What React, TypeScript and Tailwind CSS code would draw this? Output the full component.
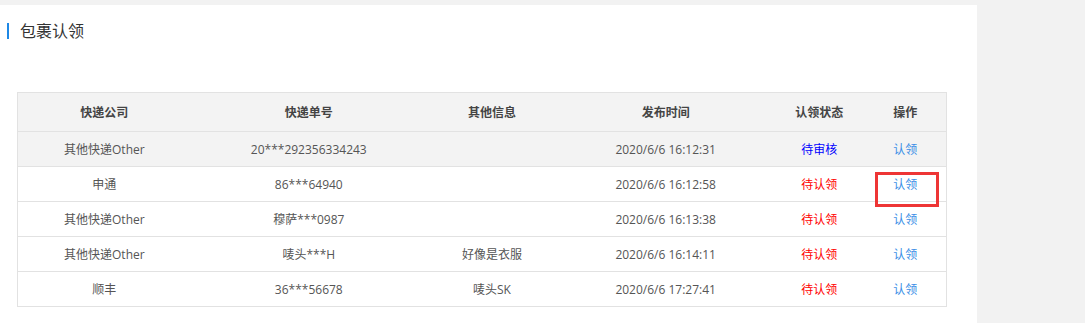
import React from 'react';

type Row = {
  company: string;
  number: string;
  info: string;
  time: string;
  status: 'review' | 'claim';
};

const rows: Row[] = [
  { company: '其他快递Other', number: '20***292356334243', info: '', time: '2020/6/6 16:12:31', status: 'review' },
  { company: '申通', number: '86***64940', info: '', time: '2020/6/6 16:12:58', status: 'claim' },
  { company: '其他快递Other', number: '穆萨***0987', info: '', time: '2020/6/6 16:13:38', status: 'claim' },
  { company: '其他快递Other', number: '唛头***H', info: '好像是衣服', time: '2020/6/6 16:14:11', status: 'claim' },
  { company: '顺丰', number: '36***56678', info: '唛头SK', time: '2020/6/6 17:27:41', status: 'claim' },
];

const headers = ['快递公司', '快递单号', '其他信息', '发布时间', '认领状态', '操作'];

const App = () => {
  return (
    <div
      className="w-full h-[323px] bg-[#f2f2f2] pt-[5px] overflow-hidden"
      style={{ fontFamily: '"Open Sans", "Noto Sans CJK SC", sans-serif' }}
    >
      <div className="w-[977px] h-full bg-white pt-[18px]">
        {/* Title */}
        <div className="flex items-center h-[16px] pl-[7px]">
          <span className="w-[2px] h-[16px] bg-[#1e88e5]" />
          <h2 className="ml-[11px] text-[16px] leading-none text-[#333]">包裹认领</h2>
        </div>

        {/* Table */}
        <div className="relative ml-[17px] mt-[53px] w-[930px]">
          <table className="w-full table-fixed border-collapse border border-[#e2e2e2] text-[12px] text-[#555]">
            <colgroup>
              <col className="w-[173px]" />
              <col className="w-[236px]" />
              <col className="w-[130px]" />
              <col className="w-[217px]" />
              <col className="w-[90px]" />
              <col className="w-[82px]" />
            </colgroup>
            <thead>
              <tr className="h-[39px] bg-[#f3f3f3] border-b border-[#e2e2e2]">
                {headers.map((h) => (
                  <th key={h} className="font-bold text-[#444] text-center p-0 pt-px">
                    {h}
                  </th>
                ))}
              </tr>
            </thead>
            <tbody>
              {rows.map((r, i) => (
                <tr
                  key={i}
                  className={`h-[35px] border-b border-[#e2e2e2] ${i === 0 ? 'bg-[#f3f3f3]' : 'bg-white'}`}
                >
                  <td className="text-center p-0 pt-px">{r.company}</td>
                  <td className="text-center p-0 pt-px">{r.number}</td>
                  <td className="text-center p-0 pt-px">{r.info}</td>
                  <td className="text-center p-0 pt-px">{r.time}</td>
                  <td className="text-center p-0 pt-px">
                    {r.status === 'review' ? (
                      <span className="text-[#0000ff]">待审核</span>
                    ) : (
                      <span className="text-[#ff0000]">待认领</span>
                    )}
                  </td>
                  <td className="text-center p-0 pt-px">
                    <a href="#" className="text-[#3a8ee6]">认领</a>
                  </td>
                </tr>
              ))}
            </tbody>
          </table>

          {/* annotation box */}
          <div className="absolute left-[858px] top-[80px] w-[64px] h-[35px] border-[3px] border-[#ee3535] pointer-events-none" />
        </div>
      </div>
    </div>
  );
};

export default App;
